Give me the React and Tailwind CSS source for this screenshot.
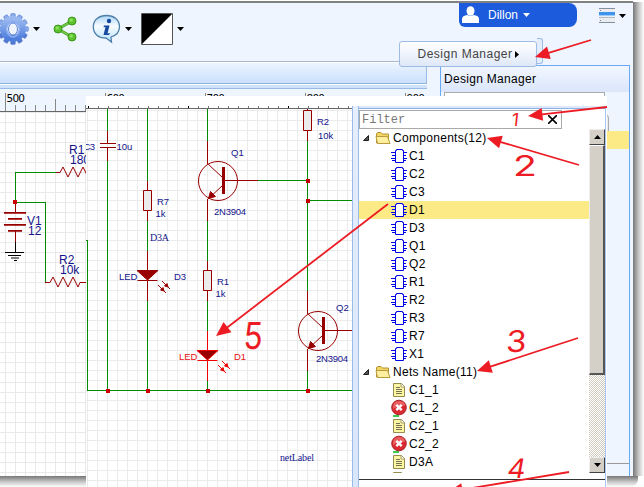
import React from "react";

const NAVY = "#14148c";
const GREEN = "#008c00";
const DARK = "#980000";
const RED = "#ed1c24";

function Caret({ className = "" }) {
  return (
    <svg className={className} width="7" height="4" viewBox="0 0 7 4">
      <path d="M0 0H7L3.5 4Z" fill="currentColor" />
    </svg>
  );
}

function GearIcon() {
  const teeth = Array.from({ length: 12 }, (_, i) => i * 30);
  return (
    <svg className="h-8 w-[29px] shrink-0" viewBox="3 0 29 32">
      <defs>
        <linearGradient id="gear" x1="0" y1="0" x2="0" y2="1">
          <stop offset="0" stopColor="#9ab8f0" />
          <stop offset="1" stopColor="#4f7fdd" />
        </linearGradient>
      </defs>
      {teeth.map((a) => (
        <rect key={a} x="13.7" y="0.6" width="4.6" height="7" rx="1" fill={a > 90 && a < 270 ? "#5478d0" : "#8babea"} stroke="#5b7fd3" strokeWidth="0.6" transform={`rotate(${a} 16 16)`} />
      ))}
      <circle cx="16" cy="16" r="9.4" fill="none" stroke="url(#gear)" strokeWidth="7" />
      <ellipse cx="16" cy="16" rx="4.500" ry="6" fill="#eef5fe" stroke="#5d83d8" strokeWidth="1" />
      <ellipse cx="16" cy="16" rx="6.500" ry="8" fill="none" stroke="#8fb0f0" strokeWidth="1.4" />
    </svg>
  );
}

function ShareIcon() {
  return (
    <svg className="h-[26px] w-[25px] shrink-0" viewBox="0 0 25 26">
      <path d="M19 5L5 13L19 21" fill="none" stroke="#4da329" strokeWidth="3" />
      <path d="M19 5L5 13L19 21" fill="none" stroke="#75cf4b" strokeWidth="1.4" />
      {[[5, 13], [19, 5], [19, 21]].map(([x, y]) => (
        <g key={y}>
          <circle cx={x} cy={y} r="4" fill="#5bc32b" stroke="#3e9620" />
          <circle cx={x - 0.8} cy={y - 1} r="1.8" fill="#8be05a" />
        </g>
      ))}
    </svg>
  );
}

function InfoIcon() {
  return (
    <svg className="h-[30px] w-[29px] shrink-0" viewBox="0 0 29 30">
      <defs>
        <linearGradient id="bubble" x1="0" y1="0" x2="0" y2="1">
          <stop offset="0" stopColor="#a9d4f5" />
          <stop offset=".4" stopColor="#f8fcff" />
          <stop offset="1" stopColor="#b8e0fa" />
        </linearGradient>
      </defs>
      <path d="M14.5 1.5C22 1.5 27.5 6 27.5 12.8C27.5 18 24 21.5 19 23L19.5 28L14 24C6 24 1.3 19.500 1.300 12.800C1.300 6 7 1.500 14.500 1.500Z" fill="url(#bubble)" stroke="#4d7fa8" strokeWidth="1.3" />
      <circle cx="17" cy="7" r="2.200" fill="#15499e" />
      <path d="M12 11.500H17.500L15.500 19.500L18 19L17 21H11.500L13.500 13L11.500 13.300Z" fill="#15499e" />
    </svg>
  );
}

function Toolbar() {
  return (
    <header className="flex h-[58px] items-start justify-between bg-[#eef5fe]">
      <div className="flex h-[51px] items-center">
        <GearIcon />
        <Caret className="ml-1" />
        <div className="ml-[13px] flex"><ShareIcon /></div>
        <div className="ml-[14px] flex"><InfoIcon /></div>
        <Caret className="ml-[4px]" />
        <svg className="ml-[9px] h-8 w-8" viewBox="0 0 32 32">
          <path d="M.5 .5H31.500V31.500H.5Z" fill="#fff" stroke="#555" />
          <path d="M1 1H31L1 31Z" fill="#000" />
        </svg>
        <Caret className="ml-1" />
      </div>
      <div className="flex pr-[7px]">
        <div className="flex h-6 w-[118px] items-center rounded-r-lg rounded-bl-md bg-[#1c5cdc] pl-[3px] text-white">
          <svg className="h-[18px] w-[17px]" viewBox="0 0 17 18">
            <ellipse cx="8.500" cy="5" rx="4" ry="4.800" fill="#fff" />
            <path d="M0 17V13Q0 9.500 5.500 9Q8.500 11 11.500 9Q17 9.500 17 13V17Z" fill="#fff" />
          </svg>
          <span className="ml-[9px] text-[12px] leading-4">Dillon</span>
          <Caret className="ml-[5px]" />
        </div>
        <svg className="mt-[5px] ml-[22px] h-[15px] w-4" viewBox="0 0 16 15">
          <path d="M0 0H16V15H0Z" fill="#e9ecf1" />
          <path d="M0 .5H16M0 14.500H16" stroke="#848e9c" />
          <path d="M0 9.500H16" stroke="#b4bcc8" />
          <path d="M0 4H16V7H0Z" fill="#3f93ea" />
          <path d="M0 7.500H16" stroke="#9ecbf7" />
          <path d="M1 2.500H2M1 12.500H2" stroke="#7b8592" />
        </svg>
        <Caret className="mt-[11px] ml-[4px]" />
      </div>
    </header>
  );
}

function BackSchematic() {
  return (
    <svg className="block h-[387px] w-[427px]" viewBox="0 89 427 387">
      <defs>
        <pattern id="gridA" width="10" height="10" x="5" y="122" patternUnits="userSpaceOnUse">
          <path d="M.5 0V10M0 .5H10" stroke="#e9e9e9" />
        </pattern>
      </defs>
      <rect x="0" y="89" width="427" height="23" fill="#eef5fe" />
      <rect x="0" y="112" width="427" height="364" fill="#fff" />
      <rect x="0" y="112" width="427" height="364" fill="url(#gridA)" />
      <path d="M0 111.500H86" stroke="#666" />
      <path d="M5.500 93V111M55.500 99V111M105.500 93V111M205.500 93V111M305.500 93V111M405.500 93V111M15.500 105V111M25.500 105V111M35.500 105V111M45.500 105V111M65.500 105V111M75.500 105V111M85.500 105V111" stroke="#888" />
      <g fontFamily="DejaVu Sans, sans-serif" fontSize="10.500">
        {[500, 600, 700, 800, 900].map((n, i) => (
          <text key={n} x={6.500 + i * 100} y="102" textLength="18.500">{n}</text>
        ))}
      </g>
      <g fill="none" stroke={GREEN} shapeRendering="crispEdges">
        <path d="M56 172.500H15.500V202.500H45.500V282.500H50" />
      </g>
      <g fill="none" stroke={DARK}>
        <path d="M56 172.500H60L63 167L68 177L73 167L78 177L83 167L88 177" />
        <path d="M45 282.500H50L53 277L58 287L63 277L68 287L73 277L78 287L80 282.500H86" />
        <path d="M15.500 202V212M15.500 231V242" />
        <path d="M4 212.800H26M8 218.800H22M4 224.800H26M8 230.800H22" strokeWidth="1.800" />
      </g>
      <path d="M15.500 242V252M5 252.500H24M8 255.500H21M11 258H19M14 260.500H17" stroke="#000" />
      <rect x="13" y="200" width="4" height="4" fill="#c00" />
      <g fill={NAVY} fontSize="12">
        <text x="69" y="154">R1</text><text x="70" y="164">180</text>
        <text x="59" y="264">R2</text><text x="60" y="273.500">10k</text>
        <text x="27" y="225">V1</text><text x="28" y="235">12</text>
      </g>
    </svg>
  );
}

function BackPanel() {
  return (
    <aside className="mt-[4px] ml-[13px] flex w-[190px] flex-col border border-b-0 border-[#66a9f5] bg-[#eef5fe]">
      <h2 className="flex h-[26px] items-center bg-linear-to-b from-[#f2f7ff] to-[#dbe6fb] pl-[3px] text-[12px] tracking-[0.3px]">Design Manager</h2>
      <div className="ml-[3px] h-5 w-[161px] border border-[#aaa] bg-white" />
      <div className="mt-[2px] flex h-[21px] w-[168px] justify-end rounded border border-[#aaa] bg-[#e6eaf0]" />
      <div className="-mt-[4px] h-[18px] bg-[#fbea85]" />
      <div className="flex-1" />
      <div className="h-[13px] border-t border-[#999]" />
    </aside>
  );
}

function EditorWindow() {
  return (
    <div className="h-[475px] w-[633px] overflow-hidden border-t-2 border-[#7f8280] bg-[#eef5fe]">
      <Toolbar />
      <div className="flex h-[415px] items-stretch">
        <main className="w-[427px] shrink-0">
          <div className="h-px w-[399px] bg-[#a9b8cc]" />
          <div className="h-px bg-white" />
          <div className="h-5 border-r border-[#99bbe8] bg-linear-to-b from-[#ecf4ff] to-[#cbe0fc]" />
          <div className="h-px bg-[#8fb4dc]" />
          <div className="h-px bg-white" />
          <div className="h-[3px] bg-[#d0e3fb]" />
          <div className="h-px bg-[#99bbe8]" />
          <BackSchematic />
        </main>
        <BackPanel />
      </div>
    </div>
  );
}

function Transistor({ x, y }) {
  return (
    <g transform={`translate(${x} ${y})`} fill="none" stroke={DARK}>
      <circle cx="10.500" cy="0.500" r="19.500" />
      <path d="M0 -17L15 -3M15 5L0 19" />
      <path d="M16 -13.500V13.500" strokeWidth="3" />
      <path d="M1 18L3 11L8 16Z" fill={DARK} />
    </g>
  );
}

function Led({ x, y, color }) {
  return (
    <g transform={`translate(${x} ${y})`} stroke={color} fill={DARK}>
      <path d="M0 -19V31" shapeRendering="crispEdges" />
      <path d="M-10.500 .5H10.500L0 10Z" />
      <path d="M-10 10.500H10" />
      <g fill={color}>
        <path d="M10.500 15L18.500 23M14.500 11L22.500 19" fill="none" />
        <path d="M16.500 21L13 20L15.500 17.500ZM20.500 17L17 16L19.500 13.500Z" />
      </g>
    </g>
  );
}

function Schematic() {
  return (
    <svg className="block h-[391px] w-[266px] shrink-0" viewBox="86 96 266 391">
      <defs>
        <pattern id="gridB" width="10" height="10" x="87" y="110" patternUnits="userSpaceOnUse">
          <path d="M.5 0V10M0 .5H10" stroke="#ebebeb" />
        </pattern>
        <pattern id="ticks" width="10" height="2" x="88" y="106" patternUnits="userSpaceOnUse">
          <path d="M.5 0V2" stroke="#777" />
        </pattern>
      </defs>
      <rect x="86" y="96" width="266" height="391" fill="#fff" />
      <rect x="86" y="109" width="266" height="378" fill="url(#gridB)" />
      <rect x="86" y="106" width="266" height="2" fill="url(#ticks)" />
      <path d="M86 108.500H352" stroke="#666" />
      <path d="M88.500 106V108M188.500 106V108M288.500 106V108" stroke="#000" />
      <g fill="none" stroke={GREEN} shapeRendering="crispEdges">
        <path d="M86 240.500H87.500V390.500H352" />
        <path d="M107.500 109V131M107.500 161V390" />
        <path d="M147.500 109V181M147.500 221V251M147.500 301V390" />
        <path d="M207.500 109V141M207.500 221V261M207.500 301V331M207.500 381V390" />
        <path d="M307.500 141V291M307.500 371V390" />
        <path d="M258 180.500H308M308 200.500H352" />
      </g>
      <g fill="none" stroke={DARK} shapeRendering="crispEdges">
        <path d="M107.500 131V143M107.500 148V161M100 143.500H116M100 147.500H116" />
        <path d="M147.500 181V221M207.500 141V164M207.500 199V221M207.500 261V301" />
        <path d="M307.500 109V141M307.500 291V314M307.500 349V371M224 180.500H258M324 330.500H352" />
      </g>
      <g fill="#ececec" stroke={DARK}>
        <path d="M143.500 190.500H151.500V210.500H143.500ZM203.500 270.500H211.500V290.500H203.500ZM303.500 110.500H311.500V130.500H303.500Z" />
      </g>
      <Transistor x={207.500} y={180.500} />
      <Transistor x={307.500} y={330.500} />
      <Led x={147.500} y={270} color={DARK} />
      <Led x={207.500} y={350} color="#f00000" />
      <path d="M306 179h4v4h-4zM306 199h4v4h-4zM106 389h4v4h-4zM146 389h4v4h-4zM206 389h4v4h-4zM306 389h4v4h-4z" fill="#c80000" />
      <g fill={NAVY} fontSize="9.500">
        <text x="83.500" y="150" textLength="11.500">C3</text><text x="116.500" y="150">10u</text>
        <text x="157" y="205">R7</text><text x="155.500" y="217">1k</text>
        <text x="119" y="280">LED</text><text x="174" y="280">D3</text>
        <text x="217" y="285">R1</text><text x="215.500" y="297">1k</text>
        <text x="231" y="156">Q1</text><text x="214" y="215" textLength="32">2N3904</text>
        <text x="317" y="125">R2</text><text x="318" y="139">10k</text>
        <text x="336" y="311">Q2</text><text x="316" y="362" textLength="32">2N3904</text>
        <g fill="#e81010"><text x="179" y="360">LED</text><text x="234" y="360">D1</text></g>
      </g>
      <g fill={NAVY} fontFamily="Liberation Serif, serif" fontSize="10">
        <text x="150" y="241" textLength="19">D3A</text>
        <text x="280" y="461" textLength="34">netLabel</text>
      </g>
    </svg>
  );
}

function ChipIcon() {
  return (
    <svg className="h-4 w-4" viewBox="0 0 16 16" fill="none" stroke="#0000e8">
      <path d="M4.500 2.500H5.500V1.500H11.500V2.500H12.500V14.500H4.500Z" fill="#fff" />
      <path d="M0 4.500H4M1 7.500H4M0 10.500H4M1 12.500H4M13 4.500H16M13 7.500H15M13 10.500H16M13 12.500H15" />
    </svg>
  );
}

function PageIcon() {
  return (
    <svg className="h-4 w-4" viewBox="0 0 16 16">
      <path d="M2.500 1.500H10.500L13.500 4.500V14.500H2.500Z" fill="#fcf5a2" stroke="#968b50" />
      <path d="M10 1.500V5H13.500" fill="#fff" stroke="#968b50" strokeWidth=".8" />
      <path d="M5 5.500H9M5 7.500H11M5 9.500H11M5 11.500H11" stroke="#777257" />
    </svg>
  );
}

function ErrorIcon() {
  return (
    <svg className="h-[18px] w-4" viewBox="0 0 16 18">
      <path d="M2 17H8" stroke="#3dcb4e" strokeWidth="2" />
      <circle cx="8" cy="8.500" r="7.300" fill="#d82a30" stroke="#a92228" />
      <path d="M2 8Q2 2 8 2Q14 2 14 7Q8 6 2 10Z" fill="#f27878" opacity=".7" />
      <path d="M5.300 5.800L10.700 11.200M10.700 5.800L5.300 11.200" stroke="#fff" strokeWidth="2.400" />
    </svg>
  );
}

function FolderIcon() {
  return (
    <svg className="h-4 w-4" viewBox="0 0 16 16">
      <path d="M1.500 13V3.500L3 2.500H6L7.500 4H13.500V13Z" fill="#f3d565" stroke="#b39232" />
      <path d="M2.500 13.500L1 6.500H12.500L15 13.500Z" fill="#fff0a0" stroke="#b99a3c" />
    </svg>
  );
}

function Folder({ label }) {
  return (
    <div className="flex h-[18px] items-center pl-1">
      <svg className="h-[6px] w-[6px]" viewBox="0 0 6 6"><path d="M5.500 .5V5.500H.5Z" fill="#555" stroke="#222" /></svg>
      <span className="ml-[6px]"><FolderIcon /></span>
      <span className="ml-[2px]">{label}</span>
    </div>
  );
}

function Leaf({ icon, label, active }) {
  return (
    <div className={active ? "flex h-[18px] items-center bg-[#fbea85] pl-8" : "flex h-[18px] items-center pl-8"}>
      {icon}
      <span className="ml-[2px]">{label}</span>
    </div>
  );
}

const PARTS = ["C1", "C2", "C3", "D1", "D3", "Q1", "Q2", "R1", "R2", "R3", "R7", "X1"];
const NETS = [["C1_1", true], ["C1_2", false], ["C2_1", true], ["C2_2", false], ["D3A", true]];

function ScrollButton({ up }) {
  return (
    <div className="flex h-4 shrink-0 items-center justify-center border border-t-[#eee] border-r-[#444] border-b-[#444] border-l-[#eee] bg-[#d4d0c8]">
      <Caret className={up ? "rotate-180" : ""} />
    </div>
  );
}

function ManagerPanel() {
  return (
    <section className="flex h-[391px] w-[255px] shrink-0 flex-col bg-white">
      <div className="h-[10px]" />
      <div className="flex h-[381px]">
        <div className="w-[7px] shrink-0 border-x border-[#99bbe8] bg-linear-to-b from-[#e6eeff] to-[#dae6fc]" />
        <div className="flex w-[247px] shrink-0 flex-col border-r border-[#a6c6f0]">
          <div className="h-[3px] border-b border-[#8db2e3] bg-[#dfe8fa]" />
          <div className="mt-px flex h-[19px] w-[203px] items-center justify-between border border-[#aaa] pr-1 pl-[2px]">
            <span className="font-['Liberation_Mono',monospace] text-[12px] leading-4 text-[#777]">Filter</span>
            <svg className="h-[9px] w-[9px]" viewBox="0 0 9 9"><path d="M0 0L9 9M9 0L0 9" stroke="#000" strokeWidth="1.600" /></svg>
          </div>
          <div className="flex h-[344px]">
            <div className="h-[344px] w-[230px] overflow-hidden text-[12px] tracking-[0.3px]">
              <Folder label="Components(12)" />
              {PARTS.map((p) => <Leaf key={p} icon={<ChipIcon />} label={p} active={p === "D1"} />)}
              <Folder label="Nets Name(11)" />
              {NETS.map(([n, ok]) => <Leaf key={n} icon={ok ? <PageIcon /> : <ErrorIcon />} label={n} />)}
              <div className="pl-8"><PageIcon /></div>
            </div>
            <div className="flex w-4 flex-col bg-[repeating-conic-gradient(#d0ccc0_0_25%,#fff_0_50%)] bg-size-[2px_2px]">
              <ScrollButton up />
              <div className="h-[230px] border-t border-r-2 border-b-2 border-l border-t-[#fff] border-r-[#555] border-b-[#555] border-l-[#eee] bg-[#d4d0c8]" />
              <div className="flex-1" />
              <ScrollButton />
            </div>
          </div>
          <div className="mt-[6px] h-px bg-[#333]" />
        </div>
      </div>
    </section>
  );
}

function Arrow({ from, to }) {
  const [x1, y1] = from;
  const [x2, y2] = to;
  const angle = (Math.atan2(y2 - y1, x2 - x1) * 180) / Math.PI;
  const length = Math.hypot(x2 - x1, y2 - y1);
  return (
    <g transform={`translate(${x2} ${y2}) rotate(${angle})`}>
      <path d={`M${-length} 0H-10`} stroke={RED} strokeWidth="1.800" />
      <path d="M0 0L-14.500 -6.500V6.500Z" fill={RED} />
    </g>
  );
}

function Annotations() {
  return (
    <svg className="pointer-events-none absolute inset-0 h-[487px] w-[644px]" viewBox="0 0 644 487">
      <Arrow from={[591, 40]} to={[535, 57]} />
      <Arrow from={[607, 107]} to={[528, 116]} />
      <Arrow from={[579, 165]} to={[487, 138]} />
      <Arrow from={[578, 338]} to={[477, 371]} />
      <Arrow from={[569, 472]} to={[448, 492]} />
      <Arrow from={[388, 204]} to={[216, 336]} />
      <g fill={RED} fontFamily="Inter, sans-serif" fontWeight="400">
        <text transform="translate(511 126) skewX(-6)" fontSize="18">1</text>
        <text transform="translate(513 176) scale(1.400 1)" fontSize="28">2</text>
        <text transform="translate(505.500 352) skewX(-4) scale(1.100 1)" fontSize="30">3</text>
        <text transform="translate(506 478) skewX(-10) scale(1.050 1)" fontSize="27">4</text>
        <text transform="translate(243 349) skewX(-3) scale(.85 1)" fontSize="37">5</text>
      </g>
    </svg>
  );
}

export default function App() {
  return (
    <div className="relative h-[487px] w-[644px] overflow-hidden bg-white font-['Liberation_Sans',Arial,sans-serif] text-black">
      <div className="flex pt-px">
        <EditorWindow />
        <div className="mt-px h-[474px] w-[11px] bg-linear-to-r from-[#777] via-[#c4c4c4] to-white" />
      </div>
      <div className="h-[11px] w-[638px] rounded-br-lg bg-linear-to-b from-[#777] via-[#c4c4c4] to-white" />

      <div className="absolute top-[38px] left-[397px] flex h-[29px] w-[146px]">
        <div className="mt-[3px] ml-[2px] flex h-[26px] w-[138px] items-center justify-center rounded-[3px] border border-[#9dbbe5] bg-linear-to-b from-white to-[#dfe8f8] text-[12px] tracking-[0.5px] text-[#444]">
          Design Manager
          <svg className="ml-[2px] h-[7px] w-1" viewBox="0 0 4 7"><path d="M0 0L4 3.500L0 7Z" fill="#000" /></svg>
        </div>
        <div className="h-[26px] w-[6px] rounded-r-[3px] border border-l-0 border-[#9dbbe5] bg-[#e4edfb]" />
      </div>

      <div className="absolute top-[96px] left-[86px] flex h-[391px] w-[521px] bg-white">
        <Schematic />
        <ManagerPanel />
      </div>
      <Annotations />
    </div>
  );
}
